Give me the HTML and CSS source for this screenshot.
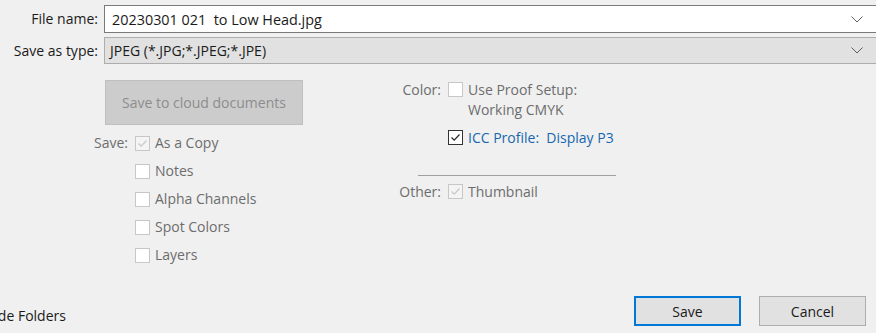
FILE: index.html
```html
<!DOCTYPE html>
<html lang="en">
<head>
    <meta charset="UTF-8">
    <title>Save As</title>
    <link rel="stylesheet" href="styles.css">
</head>
<body>
    <div class="dialog">
        <div class="fields">
            <span class="field-label">File name:</span>
            <div class="combo combo-edit">
                <span class="combo-text">20230301 021  to Low Head.jpg</span>
                <svg class="chevron" width="12" height="7" viewBox="0 0 12 7"><path d="M0.5 0.5 L6 6 L11.5 0.5" fill="none" stroke="#5f5f5f" stroke-width="1"/></svg>
            </div>
            <span class="field-label">Save as type:</span>
            <div class="combo combo-list">
                <span class="combo-text">JPEG (*.JPG;*.JPEG;*.JPE)</span>
                <svg class="chevron" width="12" height="7" viewBox="0 0 12 7"><path d="M0.5 0.5 L6 6 L11.5 0.5" fill="none" stroke="#5f5f5f" stroke-width="1"/></svg>
            </div>
        </div>

        <div class="options">
            <div class="pane pane-left">
                <button class="cloud" disabled>Save to cloud documents</button>
                <div class="opt-grid opt-grid-left">
                    <span class="opt-label">Save:</span>
                    <span class="box box-off checked"><svg width="13" height="13" viewBox="0 0 13 13"><path d="M2.5 6.5 L5.2 9.2 L10.5 3.5" fill="none" stroke="#c8c8c8" stroke-width="1.2"/></svg></span>
                    <span class="opt-text">As a Copy</span>

                    <span></span>
                    <span class="box box-off"></span>
                    <span class="opt-text">Notes</span>

                    <span></span>
                    <span class="box box-off"></span>
                    <span class="opt-text">Alpha Channels</span>

                    <span></span>
                    <span class="box box-off"></span>
                    <span class="opt-text">Spot Colors</span>

                    <span></span>
                    <span class="box box-off"></span>
                    <span class="opt-text">Layers</span>
                </div>
            </div>

            <div class="pane pane-right">
                <div class="opt-grid opt-grid-right">
                    <span class="opt-label">Color:</span>
                    <span class="box box-off"></span>
                    <span class="opt-text">Use Proof Setup:<br>Working CMYK</span>

                    <span></span>
                    <span class="box box-on"><svg width="13" height="13" viewBox="0 0 13 13"><path d="M2.5 6.5 L5.2 9.2 L10.5 3.5" fill="none" stroke="#262626" stroke-width="1.2"/></svg></span>
                    <span class="opt-text link">ICC Profile:&nbsp; Display P3</span>
                </div>
                <div class="divider"></div>
                <div class="opt-grid opt-grid-right">
                    <span class="opt-label">Other:</span>
                    <span class="box box-off checked"><svg width="13" height="13" viewBox="0 0 13 13"><path d="M2.5 6.5 L5.2 9.2 L10.5 3.5" fill="none" stroke="#c8c8c8" stroke-width="1.2"/></svg></span>
                    <span class="opt-text">Thumbnail</span>
                </div>
            </div>
        </div>

        <div class="footer">
            <span class="hide-folders">Hide Folders</span>
            <div class="buttons">
                <button class="btn btn-default">Save</button>
                <button class="btn">Cancel</button>
            </div>
        </div>
    </div>
</body>
</html>
```

FILE: styles.css
```css
* {
    margin: 0;
    padding: 0;
    box-sizing: border-box;
}
html, body {
    width: 876px;
    height: 333px;
    overflow: hidden;
    background: #f0f0f0;
}
body {
    font-family: "Open Sans", "Noto Sans", sans-serif;
    font-size: 14px;
    color: #1a1a1a;
}
.dialog {
    height: 333px;
    display: flex;
    flex-direction: column;
}

/* file name / type rows */
.fields {
    display: grid;
    grid-template-columns: 98px 1fr;
    column-gap: 6px;
    row-gap: 4px;
    padding-top: 5px;
    margin-right: -6px;
    align-items: center;
}
.field-label {
    text-align: right;
    line-height: 20px;
}
.combo {
    height: 28px;
    display: flex;
    align-items: center;
    padding-left: 7px;
    padding-right: 18px;
    border: 1px solid #7a7a7a;
    background: #fff;
}
.combo-edit .combo-text {
    font-size: 14.4px;
}
.combo-list {
    height: 27px;
    padding-left: 5px;
    background: #e1e1e1;
    border-color: #adadad;
}
.combo-text {
    flex: 1;
    white-space: pre;
}
.chevron {
    display: block;
}

/* options */
.options {
    display: flex;
    margin-top: 16px;
}
.pane-left {
    width: 380px;
}
.cloud {
    display: block;
    margin-left: 105px;
    width: 198px;
    height: 45px;
    background: #cccccc;
    border: 1px solid #bfbfbf;
    color: #8c8c8c;
    font-family: inherit;
    font-size: 14px;
}
.opt-grid {
    display: grid;
    column-gap: 5px;
    align-items: start;
    color: #6d6d6d;
}
.opt-grid-left {
    grid-template-columns: 130px 15px auto;
    grid-auto-rows: 28px;
    margin-top: 4px;
}
.opt-grid-left .opt-label,
.opt-grid-left .opt-text {
    line-height: 28px;
}
.opt-grid-left .box {
    margin-top: 7px;
}
.opt-label {
    text-align: right;
    margin-right: 2px;
}
.opt-grid-right {
    grid-template-columns: 63px 15px auto;
    row-gap: 8px;
    line-height: 20px;
}
.opt-grid-right .box {
    margin-top: 2px;
}
.box {
    width: 15px;
    height: 15px;
    display: flex;
    align-items: center;
    justify-content: center;
    border: 1px solid #c7c7c7;
    background: #fff;
}
.box.checked {
    background: #f4f4f4;
}
.box-on {
    border-color: #333;
}
.box svg {
    display: block;
}
.link {
    color: #1767b0;
}
.divider {
    width: 198px;
    height: 1px;
    background: #a0a0a0;
    margin: 27px 0 6px 38px;
}

/* footer */
.footer {
    margin-top: auto;
    padding-bottom: 7px;
    display: flex;
    align-items: flex-end;
    justify-content: space-between;
}
.hide-folders {
    margin-left: -16px;
    line-height: 20px;
}
.buttons {
    display: flex;
    gap: 18px;
    padding-right: 10px;
}
.btn {
    width: 107px;
    height: 30px;
    background: #e1e1e1;
    border: 1px solid #adadad;
    color: #1a1a1a;
    font-family: inherit;
    font-size: 14px;
}
.btn-default {
    border: 2px solid #0078d7;
}
```
